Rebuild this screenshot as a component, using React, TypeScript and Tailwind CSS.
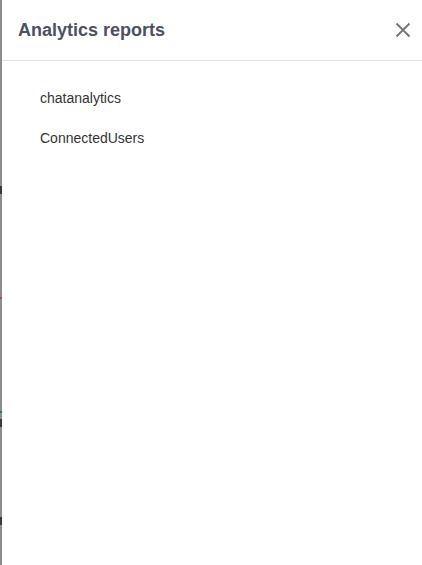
import React from "react";

export default function App() {
  return (
    <div className="flex h-[565px] w-[422px] overflow-hidden bg-white" style={{ fontFamily: '"Liberation Sans", Arial, sans-serif' }}>
      <div className="relative h-full w-[2px] shrink-0 bg-[#8c8c8c]">
        <div className="absolute left-0 top-[186px] h-[8px] w-[2px] bg-[#3a3a3a]" />
        <div className="absolute left-0 top-[297px] h-[2px] w-[2px] bg-[#b04848]" />
        <div className="absolute left-0 top-[411px] h-[2px] w-[2px] bg-[#2a6a80]" />
        <div className="absolute left-0 top-[419px] h-[8px] w-[2px] bg-[#3a3a3a]" />
        <div className="absolute left-0 top-[517px] h-[8px] w-[2px] bg-[#3a3a3a]" />
      </div>
      <div className="flex flex-1 flex-col">
        <div className="flex h-[61px] items-center justify-between border-b border-[#e2e2e2] pl-[16px] pr-[11px]">
          <h2 className="text-[18px] font-bold leading-none text-[#4a5163]">Analytics reports</h2>
          <button className="flex h-[16px] w-[16px] items-center justify-center text-[#777]">
            <svg width="16" height="16" viewBox="0 0 16 16" fill="none" stroke="currentColor" strokeWidth="2">
              <path d="M1.5 1.5 L14.5 14.5 M14.5 1.5 L1.5 14.5" />
            </svg>
          </button>
        </div>
        <ul className="flex flex-col pl-[38px] pt-[28px] text-[14px] text-[#333]">
          <li className="h-[40px] leading-[18px]">chatanalytics</li>
          <li className="h-[40px] leading-[18px]">ConnectedUsers</li>
        </ul>
      </div>
    </div>
  );
}
